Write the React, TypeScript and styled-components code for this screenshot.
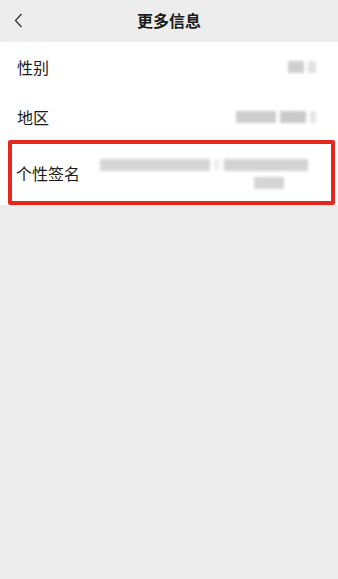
import React from "react";
import styled, { createGlobalStyle } from "styled-components";

const Global = createGlobalStyle`
  html, body { margin: 0; padding: 0; background: #ededed; }
  body { font-family: "Noto Sans CJK SC", "Noto Sans", sans-serif; color: #1a1a1a; }
`;

const Page = styled.div`
  width: 338px;
  height: 579px;
  background: #ededed;
  display: flex;
  flex-direction: column;
  overflow: hidden;
`;

const Header = styled.div`
  height: 40px;
  display: grid;
  grid-template-columns: 40px 1fr 40px;
  align-items: center;
  background: #ededed;
`;

const Back = styled.div`
  display: flex;
  align-items: center;
  padding-left: 14px;
  padding-top: 1px;
`;

const Title = styled.div`
  text-align: center;
  font-size: 16px;
  font-weight: 600;
  color: #1b1b1b;
  line-height: 20px;
`;

const List = styled.div`
  display: flex;
  flex-direction: column;
  background: #ffffff;
  margin-top: 2px;
`;

const Row = styled.div<{ $h: number; $shift?: number }>`
  height: ${(p) => p.$h}px;
  box-sizing: border-box;
  padding: ${(p) => p.$shift || 0}px 22px 0 17px;
  display: flex;
  align-items: center;
  justify-content: space-between;
`;

const Highlight = styled.div`
  margin: 0 3px 0 8px;
  height: 65px;
  box-sizing: border-box;
  border: 4px solid #e5271d;
  border-radius: 2px;
  display: flex;
  align-items: center;
  padding: 0 23px 0 4px;
`;

const Label = styled.span`
  font-size: 16px;
  line-height: 20px;
  color: #1a1a1a;
  flex-shrink: 0;
`;

const Blurred = styled.div`
  display: flex;
  flex-direction: column;
  align-items: flex-end;
  gap: 6px;
  filter: blur(1.6px);
`;

const BlurLine = styled.div`
  display: flex;
  gap: 4px;
`;

const Blob = styled.span<{ $w: number; $tone?: string }>`
  display: block;
  width: ${(p) => p.$w}px;
  height: 12px;
  background: ${(p) => p.$tone || "#d2d2d2"};
`;

const SigValue = styled.div`
  flex: 1;
  display: flex;
  flex-direction: column;
  align-items: flex-end;
  gap: 6px;
  filter: blur(1.6px);
  padding-left: 18px;
  margin-top: 2px;
`;

export default function App() {
  return (
    <>
      <Global />
      <Page>
        <Header>
          <Back>
            <svg width="9" height="15" viewBox="0 0 9 15">
              <path d="M7.5 1 L1.5 7.5 L7.5 14" fill="none" stroke="#333" strokeWidth="1.3" />
            </svg>
          </Back>
          <Title>更多信息</Title>
          <div />
        </Header>
        <List>
          <Row $h={49}>
            <Label>性别</Label>
            <Blurred>
              <BlurLine>
                <Blob $w={16} $tone="#cfcfcf" />
                <Blob $w={8} $tone="#e2e2e2" />
              </BlurLine>
            </Blurred>
          </Row>
          <Row $h={49} $shift={3}>
            <Label>地区</Label>
            <Blurred>
              <BlurLine>
                <Blob $w={40} $tone="#cdcdcd" />
                <Blob $w={26} $tone="#c9c9c9" />
                <Blob $w={6} $tone="#e6e6e6" />
              </BlurLine>
            </Blurred>
          </Row>
          <Highlight>
            <Label>个性签名</Label>
            <SigValue>
              <BlurLine>
                <Blob $w={110} $tone="#d6d6d6" />
                <Blob $w={6} $tone="#f0f0f0" />
                <Blob $w={84} $tone="#d3d3d3" />
              </BlurLine>
              <BlurLine>
                <Blob $w={30} $tone="#d4d4d4" />
                <Blob $w={20} $tone="#ffffff" />
              </BlurLine>
            </SigValue>
          </Highlight>
        </List>
      </Page>
    </>
  );
}
